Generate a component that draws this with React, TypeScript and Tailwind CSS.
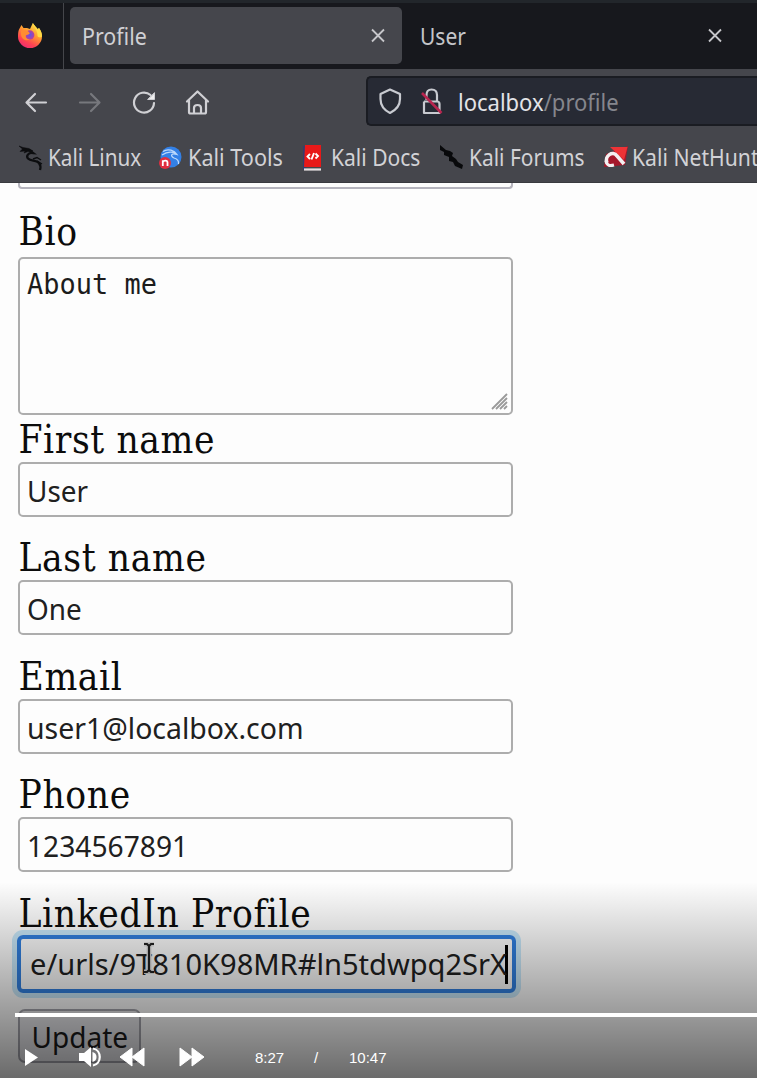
import React from "react";

function Close() {
  return (
    <svg width="16" height="16" viewBox="0 0 16 16" fill="none" stroke="#c6c6ca" strokeWidth="1.8">
      <path d="M2 1.500 14 13.500M14 1.500 2 13.500" />
    </svg>
  );
}

function Firefox() {
  return (
    <svg width="26" height="27" viewBox="0 0 26 27">
      <defs>
        <linearGradient id="flame" x1="0.8" y1="0" x2="0.25" y2="1">
          <stop offset="0" stopColor="#ffef4f" />
          <stop offset="0.42" stopColor="#ff9a30" />
          <stop offset="0.75" stopColor="#ff4451" />
          <stop offset="1" stopColor="#ee2a74" />
        </linearGradient>
        <radialGradient id="globe">
          <stop offset="0" stopColor="#5c55e8" />
          <stop offset="1" stopColor="#b8409c" />
        </radialGradient>
      </defs>
      <path d="M2 6.500 4.500 2 6.500 5 10 5 13 6 15.800 0C17.500 3 19 3.500 20.500 6L22 5C24 8 25 11 25 13.500A12 11.500 0 0 1 1 13.500C1 11 1.200 8.500 2 6.500Z" fill="url(#flame)" />
      <circle cx="12.8" cy="11.900" r="4.600" fill="url(#globe)" />
      <path d="M4 8C7 7 10 7 12 9.200 14 11 11 11.400 9 12.200 8 14.500 10 16.300 13 16.200 9 19 4 16 4 11Z" fill="#ff8c31" />
      <path d="M15.8 0C16 4 21 7 20.500 13 22.500 16 25 13 25 13.500 25 10 24 7.500 22 5L21 6.500C19 3.500 17.500 3 15.8 0Z" fill="#ffda45" />
    </svg>
  );
}

function Dragon() {
  return (
    <svg width="25" height="26" viewBox="0 0 25 26" fill="none" stroke="#0c0d0f">
      <path d="M0 1 4 2.500 10 3.500 14 6 9 6.500 5 8 6 6 1 6.500 3.500 4Z" fill="#0c0d0f" strokeWidth="0.5" />
      <path d="M10 5 14 8C9 7.500 7 11 9 13.500 12 16.500 17 14.500 20 18 21.500 20 22 22 21 25" strokeWidth="2.300" />
      <path d="M14 14 18 12.500 22 15M18 16 23 19" strokeWidth="1.4" />
    </svg>
  );
}

function Tools() {
  return (
    <svg width="26" height="25" viewBox="0 0 26 25" fill="none">
      <circle cx="12" cy="12" r="10.500" fill="#3380e6" />
      <path d="M4 6.500C9 3 15.500 5.500 18 9.500 12 7.500 11 11 15 13 18.500 14 20 16 19.500 19M3 10C8 6.500 13 6.500 17 8.500" stroke="#bcd8fb" strokeWidth="1.3" />
      <circle cx="6" cy="18" r="6" fill="#e02f40" />
      <path d="M3.800 21V15.200M3.800 17C4.500 15 8.500 15 8.500 17.500V21" stroke="#fff" strokeWidth="1.800" />
    </svg>
  );
}

function Docs() {
  return (
    <svg width="20" height="26" viewBox="0 0 20 26" fill="none">
      <path d="M1 1H4V25H1Z" fill="#343c70" />
      <path d="M3 0H19V22H2Z" fill="#e81919" />
      <path d="M2 24.500H19" stroke="#e6dfe2" strokeWidth="2.200" />
      <path d="M8 9 5.500 11.500 8 14M13.500 8.500 16 11 13.500 13.500M12 8 9.500 14.500" stroke="#fff" strokeWidth="1.900" />
    </svg>
  );
}

function Forums() {
  return (
    <svg width="24" height="25" viewBox="0 0 24 25" fill="#08090b">
      <path d="M0 0 6 5 10 6 13 8 12 11 16 14 18 17 23 20 22 24 15 21 13 17 9 16 9 12 4 10 4 7 0 5Z" />
    </svg>
  );
}

function Hunter() {
  return (
    <svg width="25" height="23" viewBox="0 0 25 23">
      <path d="M3 8 25 0 22 19 1 21Z" fill="#a5182b" />
      <path d="M7 1H24.500L21 14Z" fill="#ee3336" />
      <path d="M4 17C1 10 10 4 14 10L21 18" fill="none" stroke="#f4f0f1" strokeWidth="3.600" />
      <path d="M3 15C4 20 7 20 11 19" fill="none" stroke="#f4f0f1" strokeWidth="3" />
    </svg>
  );
}

const bookmarks = [
  { text: "Kali Linux", icon: <Dragon />, cell: "w-[140px]", squeeze: "scale-x-[0.9]" },
  { text: "Kali Tools", icon: <Tools />, cell: "w-[143px]", squeeze: "scale-x-[0.94]" },
  { text: "Kali Docs", icon: <Docs />, cell: "w-[138px]", squeeze: "scale-x-[0.915]" },
  { text: "Kali Forums", icon: <Forums />, cell: "w-[163px]", squeeze: "scale-x-[0.91]" },
  { text: "Kali NetHunter", icon: <Hunter />, cell: "w-[190px]", squeeze: "scale-x-[0.92]" },
];

const fields = [
  { label: "First name", value: "User", squeeze: "scale-x-[0.945]" },
  { label: "Last name", value: "One", squeeze: "scale-x-[0.945]" },
  { label: "Email", value: "user1@localbox.com", squeeze: "scale-x-[0.964]" },
  { label: "Phone", value: "1234567891", squeeze: "scale-x-[0.955]" },
];

const labelStyle =
  "block h-[45px] whitespace-nowrap pl-[0.5px] pt-[1px] font-['DejaVu_Serif_Condensed','DejaVu_Serif',serif] text-[38.5px] leading-[44px] tracking-[0.6px] text-[#0c0c0c] [font-stretch:condensed]";

function TabStrip() {
  return (
    <div className="flex h-[69px] border-t-[3px] border-[#22262b] bg-[#17181d]">
      <div className="flex w-[64px] items-center border-r border-[#45464b] pl-[17px]">
        <Firefox />
      </div>
      <div className="ml-[6px] mt-[4px] flex h-[57px] w-[332px] items-center justify-between rounded-[5px] bg-[#45464c] pl-[12px] pr-[16px] text-[#d0d0d4]">
        <span className="origin-left scale-x-[0.892] text-[24px]">Profile</span>
        <Close />
      </div>
      <div className="mt-[4px] flex h-[57px] w-[339px] items-center justify-between pl-[18px] pr-[18px] text-[#c4c5c9]">
        <span className="origin-left scale-x-[0.875] text-[24px]">User</span>
        <Close />
      </div>
    </div>
  );
}

function NavBar() {
  return (
    <div className="flex h-[66px] items-start bg-[#45464c] pt-[7px]">
      <div className="flex h-[50px] w-[366px] shrink-0 items-center pl-[24px] pt-[2px]">
        <svg width="190" height="30" viewBox="0 0 190 30" fill="none" stroke="#d0d0d4" strokeWidth="2.200" strokeLinecap="round" strokeLinejoin="round">
          <path d="M3 15.500H22M11 7 2.500 15.500 11 24" />
          <path d="M56 15.500H75M67 7 75.500 15.500 67 24" stroke="#77787d" />
          <path d="M130 16A10 10 0 1 1 126.500 8" />
          <path d="M130.500 6V12.500H124Z" fill="#eeeeef" strokeWidth="1" />
          <path d="M163 14.500 173.500 4.500 184 14.500M165 13V25Q165 26.500 166.500 26.500H180.500Q182 26.500 182 25V13M170 26V21Q170 18 173.500 18 177 18 177 21V26" />
        </svg>
      </div>
      <div className="flex h-[50px] flex-1 items-center rounded-l-[5px] border-y-2 border-l-2 border-[#1a1c22] bg-[#272a34] pl-[11px]">
        <svg width="66" height="30" viewBox="0 0 66 30" fill="none" stroke="#c8cad0" strokeWidth="2.200" strokeLinejoin="round">
          <path d="M11 3.500 21 8V13C21 20 17 24 11 27 5 24 1.500 20 1.500 13V8Z" />
          <path d="M45 15.500V27H60.500V18Q60.500 15.500 58 15.500H45M47.500 14V9Q47.500 3.500 52.500 3.500 58 3.500 58 9V15" />
          <path d="M43 7 62.500 27" stroke="#b8254f" strokeWidth="2.600" />
        </svg>
        <span className="ml-[13px] origin-left scale-x-[0.957] whitespace-nowrap pt-[2px] text-[23px] text-[#e3e4e8]">
          localbox<span className="text-[#85868d]">/profile</span>
        </span>
      </div>
    </div>
  );
}

export default function App() {
  return (
    <div className="relative h-[1078px] w-[757px] overflow-hidden bg-[#fdfdfd] font-['Noto_Sans',sans-serif]">
      <TabStrip />
      <NavBar />
      <div className="flex h-[48px] overflow-hidden border-b border-[#393a3f] bg-[#45464c] pb-[2px] pl-[19px] text-[#d2d2d6]">
        {bookmarks.map((b) => (
          <div key={b.text} className={`flex shrink-0 items-center ${b.cell}`}>
            <span className="flex w-[29px] shrink-0">{b.icon}</span>
            <span className={`origin-left whitespace-nowrap text-[23px] ${b.squeeze}`}>{b.text}</span>
          </div>
        ))}
      </div>

      <form className="w-[513px] pl-[18px]">
        <div className="h-[6px] rounded-b-[4px] border-x-2 border-b-2 border-[#b5b4bd]" />
        <div className="mt-[20px] h-[208px]">
          <label className="block h-[48px]"><span className={labelStyle}>Bio</span></label>
          <div className="flex h-[158px] justify-between rounded-[5px] border-2 border-[#adadad] pl-[7px] pt-[8px]">
            <span className="origin-left scale-x-[0.963] whitespace-pre font-['DejaVu_Sans_Mono',monospace] text-[28px] leading-[35px] text-[#1c1c1c]">About me</span>
            <svg className="mb-[3px] mr-[3px] self-end" width="17" height="17" viewBox="0 0 17 17" stroke="#9a9a9a" strokeWidth="1.8">
              <path d="M1 16 16 1M5 16 16 5M9 16 16 9M13 16 16 13" />
            </svg>
          </div>
        </div>
        {fields.map((f) => (
          <div key={f.label} className="h-[118.4px]">
            <label className={labelStyle}>{f.label}</label>
            <div className="flex h-[55px] items-center rounded-[5px] border-2 border-[#adadad] pl-[7px] pt-[3px] text-[#202020]">
              <span className={`origin-left whitespace-nowrap text-[29.5px] leading-[40px] ${f.squeeze}`}>{f.value}</span>
            </div>
          </div>
        ))}
        <div className="h-[118.4px]">
          <label className={labelStyle}>LinkedIn Profile</label>
          <div className="-ml-px -mr-[3px] -mt-px flex h-[58px] items-center rounded-[6px] border-4 border-[#3180e0] pl-[9px] pt-px text-[#202020] shadow-[0_0_0_5px_#c8e8fa]">
            <span className="w-[474px] origin-left scale-x-[0.985] whitespace-nowrap text-[29.5px] leading-[40px]">e/urls/9T810K98MR#ln5tdwpq2SrX</span>
            <span className="ml-px h-[39px] w-[3px] shrink-0 bg-black" />
          </div>
        </div>
        <div className="flex h-[54px] w-[123px] items-center justify-center rounded-[7px] border-2 border-[#a5a5ad] bg-[#e9e9ed] pt-[2px] text-[#1b1b1b]">
          <span className="scale-x-[0.95] text-[29.5px] leading-[40px]">Update</span>
        </div>
      </form>

      <svg className="absolute left-[142px] top-[942px]" width="14" height="32" viewBox="0 0 14 32" fill="none">
        <path d="M2 2H5L7 4 9 2H12M7 4V28M2 30H5L7 28 9 30H12" stroke="#e2e2e2" strokeWidth="5" />
        <path d="M2 2H5L7 4 9 2H12M7 4V28M2 30H5L7 28 9 30H12" stroke="#222" strokeWidth="2.200" />
      </svg>

      <div className="absolute inset-x-0 bottom-0 flex h-[196px] flex-col bg-gradient-to-b from-black/0 to-black/58 pt-[131px]">
        <div className="ml-[15px] h-[4px] shrink-0 bg-white" />
        <div className="flex h-[61px] items-start pl-[24px] pt-[29px] text-white">
          <svg width="182" height="22" viewBox="24 1046 182 22" fill="#fff">
            <path d="M25 1049 38 1057.500 25 1066Z" />
            <path d="M79 1053H84L91 1047V1067L84 1061H79Z" />
            <path d="M92.500 1052Q96.500 1053 96.500 1057 96.500 1061 92.500 1062Z" />
            <path d="M93 1048.500C102 1050 102 1064 93 1065.500" fill="none" stroke="#fff" strokeWidth="2.200" />
            <path d="M132 1048V1066L120 1057ZM144 1048V1066L132 1057Z" stroke="#fff" strokeWidth="1" strokeLinejoin="round" />
            <path d="M180 1048 192 1057 180 1066ZM192 1048 204 1057 192 1066Z" stroke="#fff" strokeWidth="1" strokeLinejoin="round" />
          </svg>
          <div className="ml-[49px] flex pt-[2px] font-['Liberation_Sans',sans-serif] text-[15px] leading-[20px]">
            <span className="w-[59px]">8:27</span>
            <span className="w-[35px]">/</span>
            <span>10:47</span>
          </div>
        </div>
      </div>
    </div>
  );
}
